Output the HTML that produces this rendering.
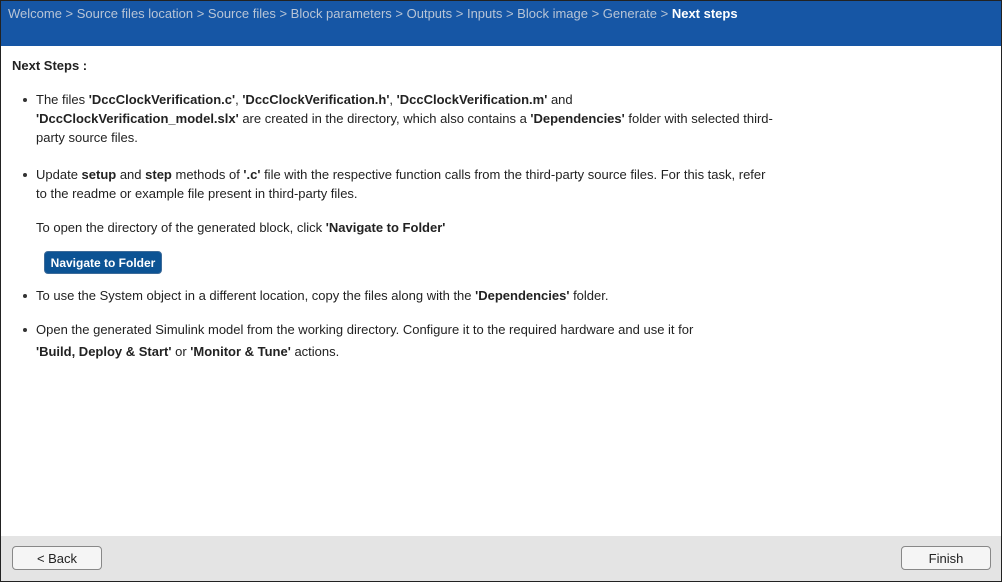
<!DOCTYPE html>
<html><head><style>
body{margin:0;width:1002px;height:582px;overflow:hidden;font-family:"Liberation Sans",Arial,sans-serif;font-size:13px;color:#222;}
.frame{position:absolute;left:0;top:0;width:1000px;height:580px;border:1px solid #222;background:#fff;}
.hdr{position:absolute;left:0;top:0;width:1000px;height:45px;background:#1656a5;}
.bc{position:absolute;left:7px;top:5px;font-size:13px;color:#b7c4d6;white-space:nowrap;}
.bc b{color:#fff;}
.t{position:absolute;left:35px;white-space:nowrap;line-height:19px;}
.dot{position:absolute;left:22px;width:4px;height:4px;border-radius:50%;background:#333;}
.nav{position:absolute;left:43px;top:250px;width:118px;height:23px;background:#0c5394;border:1px solid #3d6b99;border-radius:4px;color:#fff;font-size:12px;font-weight:bold;text-align:center;line-height:22px;box-sizing:border-box;}
.ftr{position:absolute;left:0;top:535px;width:1000px;height:45px;background:#e4e4e4;}
.btn{position:absolute;top:10px;height:24px;border:1px solid #888;border-radius:4px;background:#f5f5f5;font-size:13px;text-align:center;line-height:23px;box-sizing:border-box;}
</style></head><body><div class="frame">
<div class="hdr"><div class="bc">Welcome &gt; Source files location &gt; Source files &gt; Block parameters &gt; Outputs &gt; Inputs &gt; Block image &gt; Generate &gt; <b>Next steps</b></div></div>
<div class="t" style="left:11px;top:55px;font-weight:bold">Next Steps :</div>
<div class="dot" style="top:97px"></div>
<div class="t" style="top:89px">The files <b>'DccClockVerification.c'</b>, <b>'DccClockVerification.h'</b>, <b>'DccClockVerification.m'</b> and</div>
<div class="t" style="top:108px"><b>'DccClockVerification_model.slx'</b> are created in the directory, which also contains a <b>'Dependencies'</b> folder with selected third-</div>
<div class="t" style="top:127px">party source files.</div>
<div class="dot" style="top:172px"></div>
<div class="t" style="top:164px">Update <b>setup</b> and <b>step</b> methods of <b>'.c'</b> file with the respective function calls from the third-party source files. For this task, refer</div>
<div class="t" style="top:183px">to the readme or example file present in third-party files.</div>
<div class="t" style="top:217px">To open the directory of the generated block, click <b>'Navigate to Folder'</b></div>
<div class="nav">Navigate to Folder</div>
<div class="dot" style="top:293px"></div>
<div class="t" style="top:285px">To use the System object in a different location, copy the files along with the <b>'Dependencies'</b> folder.</div>
<div class="dot" style="top:327px"></div>
<div class="t" style="top:319px">Open the generated Simulink model from the working directory. Configure it to the required hardware and use it for</div>
<div class="t" style="top:341px"><b>'Build, Deploy &amp; Start'</b> or <b>'Monitor &amp; Tune'</b> actions.</div>
<div class="ftr"><div class="btn" style="left:11px;width:90px">&lt; Back</div><div class="btn" style="left:900px;width:90px">Finish</div></div>
</div></body></html>
